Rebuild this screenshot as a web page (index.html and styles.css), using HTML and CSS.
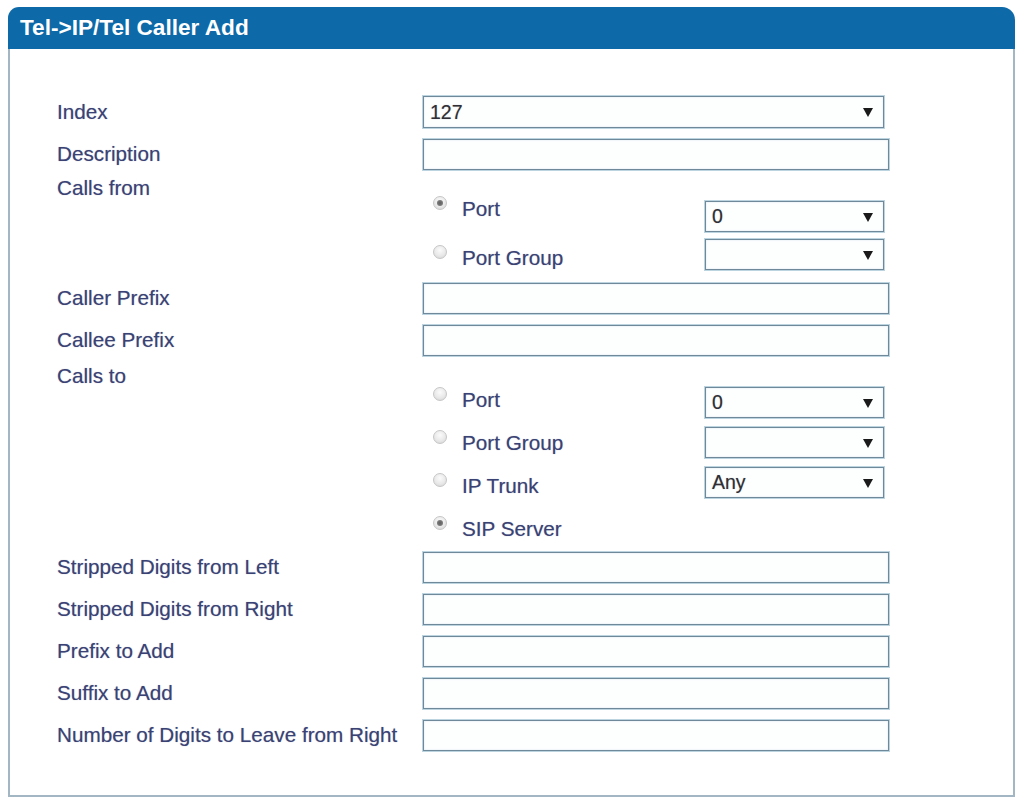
FILE: index.html
```html
<!DOCTYPE html>
<html lang="en">
<head>
<meta charset="utf-8">
<title>Tel-&gt;IP/Tel Caller Add</title>
<link rel="stylesheet" href="styles.css">
</head>
<body>
<div class="panel">
  <div class="panel-head">Tel-&gt;IP/Tel Caller Add</div>
  <div class="panel-body">
    <div class="row">
      <div class="label">Index</div>
      <div class="field"><div class="select wide"><span>127</span><i class="arrow"></i></div></div>
    </div>
    <div class="row">
      <div class="label">Description</div>
      <div class="field"><div class="input"></div></div>
    </div>
    <div class="row group from">
      <div class="label top">Calls from</div>
      <div class="options">
        <div class="radios">
          <label class="radio-line"><span class="radio checked"></span>Port</label>
          <label class="radio-line"><span class="radio"></span>Port Group</label>
        </div>
        <div class="selects">
          <div class="select small"><span>0</span><i class="arrow"></i></div>
          <div class="select small"><span></span><i class="arrow"></i></div>
        </div>
      </div>
    </div>
    <div class="row">
      <div class="label">Caller Prefix</div>
      <div class="field"><div class="input"></div></div>
    </div>
    <div class="row">
      <div class="label">Callee Prefix</div>
      <div class="field"><div class="input"></div></div>
    </div>
    <div class="row group to">
      <div class="label top">Calls to</div>
      <div class="options">
        <div class="radios">
          <label class="radio-line"><span class="radio"></span>Port</label>
          <label class="radio-line"><span class="radio"></span>Port Group</label>
          <label class="radio-line"><span class="radio"></span>IP Trunk</label>
          <label class="radio-line"><span class="radio checked"></span>SIP Server</label>
        </div>
        <div class="selects">
          <div class="select small"><span>0</span><i class="arrow"></i></div>
          <div class="select small"><span></span><i class="arrow"></i></div>
          <div class="select small"><span>Any</span><i class="arrow"></i></div>
        </div>
      </div>
    </div>
    <div class="row">
      <div class="label">Stripped Digits from Left</div>
      <div class="field"><div class="input"></div></div>
    </div>
    <div class="row">
      <div class="label">Stripped Digits from Right</div>
      <div class="field"><div class="input"></div></div>
    </div>
    <div class="row">
      <div class="label">Prefix to Add</div>
      <div class="field"><div class="input"></div></div>
    </div>
    <div class="row">
      <div class="label">Suffix to Add</div>
      <div class="field"><div class="input"></div></div>
    </div>
    <div class="row">
      <div class="label">Number of Digits to Leave from Right</div>
      <div class="field"><div class="input"></div></div>
    </div>
  </div>
</div>
</body>
</html>
```
FILE: styles.css
```css
* { box-sizing: border-box; }

html, body {
  margin: 0;
  background: #ffffff;
}

body {
  font-family: "Liberation Sans", Arial, sans-serif;
  font-size: 20.7px;
  color: #3a4274;
  text-shadow: 0 0 1px rgba(58, 66, 116, 0.45);
}

.panel {
  margin: 7px 2px 0 8px;
  width: 1007px;
}

.panel-head {
  height: 42px;
  background: #0d69a7;
  border-radius: 11px 13px 0 0;
  color: #ffffff;
  font-weight: bold;
  font-size: 22.6px;
  line-height: 42px;
  padding-left: 12px;
  text-shadow: none;
}

.panel-body {
  border: 2px solid #a3b6c3;
  border-top: none;
  height: 748px;
  padding: 42px 0 0 47px;
}

.row {
  display: grid;
  grid-template-columns: 366px 466px;
  height: 42px;
  align-items: center;
}

.row.group { align-items: start; }
.row.from { height: 102px; }
.row.to { height: 185px; }

.label {
  line-height: 22px;
  white-space: nowrap;
}

.label.top { padding-top: 2px; }
.row.to .label.top { padding-top: 4px; }

.input {
  width: 466px;
  height: 31px;
  border: 1px solid #6f899b;
  box-shadow: 0 0 0 1px #bcd3e0, inset 0 0 2px #d6e7f0;
  background: #fdfefe;
}

.select {
  position: relative;
  height: 32px;
  border: 1px solid #6f899b;
  box-shadow: 0 0 0 1px #bcd3e0, inset 0 0 2px #d6e7f0;
  background: #fdfefe;
  color: #2f2f35;
  font-size: 19.5px;
  line-height: 30px;
  padding-left: 6px;
  text-shadow: 0 0 1px rgba(40, 40, 50, 0.4);
}

.select.wide { width: 461px; }
.select.small { width: 179px; height: 31px; line-height: 29px; }

/* dropdown triangle */
.arrow {
  position: absolute;
  right: 10px;
  top: 50%;
  margin-top: -4px;
  width: 0;
  height: 0;
  border-left: 5px solid transparent;
  border-right: 5px solid transparent;
  border-top: 9px solid #1a1a1a;
}

/* radio list and dropdown list sit side by side, each in its own flow */
.options {
  display: grid;
  grid-template-columns: 282px 179px;
  align-items: start;
}

.radios,
.selects {
  display: flex;
  flex-direction: column;
}

.row.from .radios { padding-top: 9px; }
.row.from .radio-line { height: 49px; }
.row.from .selects { padding-top: 26px; gap: 7px; }

.row.to .radios { padding-top: 17px; }
.row.to .radio-line { height: 43px; }
.row.to .selects { padding-top: 26px; gap: 9px; }

.radio-line {
  display: flex;
  align-items: center;
  line-height: 22px;
}

.radio {
  width: 14px;
  height: 14px;
  margin: 0 15px 0 10px;
  border-radius: 50%;
  border: 1px solid #c6c6c6;
  background: radial-gradient(circle at 50% 35%, #fbfbfb 0%, #e9e9e9 55%, #d2d2d2 100%);
  position: relative;
  flex: none;
  transform: translateY(-6px);
}

.radio.checked::after {
  content: "";
  position: absolute;
  left: 3px;
  top: 3px;
  width: 6px;
  height: 6px;
  border-radius: 50%;
  background: radial-gradient(circle, #5f5f5f 0%, #8a8a8a 100%);
}
```
